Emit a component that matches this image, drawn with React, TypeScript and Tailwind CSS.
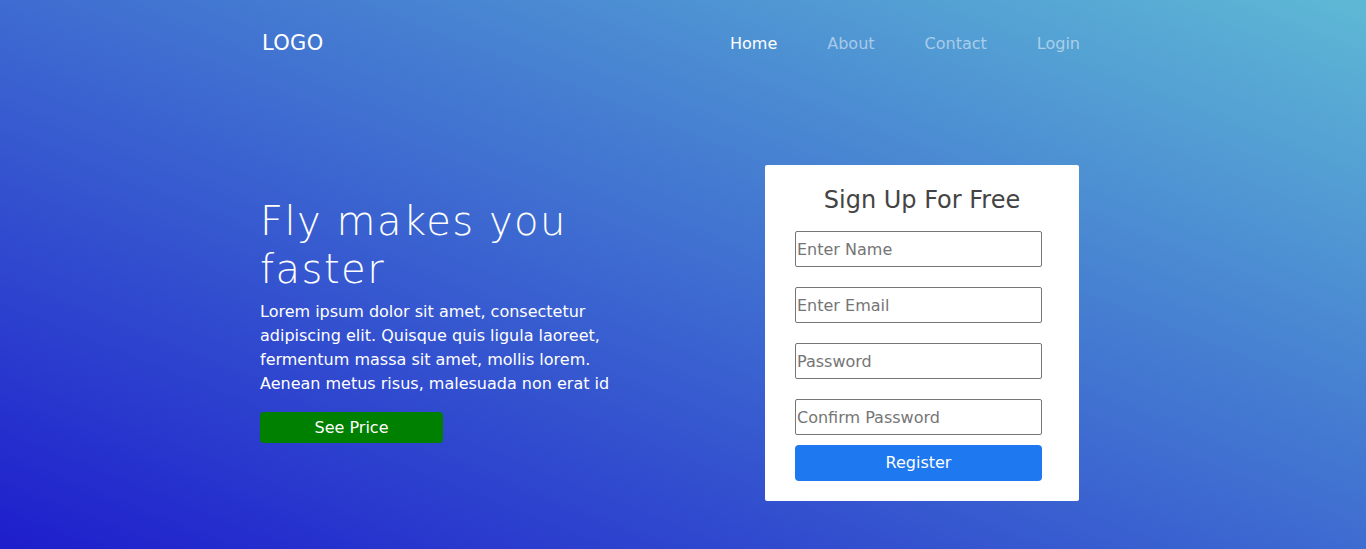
import { useState } from "react";

const navLinks = ["Home", "About", "Contact", "Login"];

const fields = [
  { name: "name", type: "text", placeholder: "Enter Name" },
  { name: "email", type: "email", placeholder: "Enter Email" },
  { name: "password", type: "password", placeholder: "Password" },
  { name: "confirm", type: "password", placeholder: "Confirm Password" },
];

const App = () => {
  const [values, setValues] = useState<Record<string, string>>({});

  return (
    <div className="min-h-[549px] w-full bg-[linear-gradient(to_top_right,#1e1ecc,#5eb9d5)] font-['DejaVu_Sans',sans-serif] text-white">
      <div className="ml-[260px] w-[820px]">
        <header className="flex h-[88px] items-center justify-between">
          <span className="pl-[2px] text-[21px] tracking-[0.3px]">LOGO</span>
          <nav className="flex gap-[50px] text-[16px]">
            {navLinks.map((link, i) => (
              <a
                key={link}
                href="#"
                className={i === 0 ? "text-white" : "text-white/50"}
              >
                {link}
              </a>
            ))}
          </nav>
        </header>

        <main className="mt-[77px] flex items-start justify-between">
          <section className="mt-[32px] w-[360px]">
            <h1 className="text-[40px] font-light leading-[48px] tracking-[1.5px]">
              Fly makes you faster
            </h1>
            <p className="mt-[7px] text-[16px] leading-[24px]">
              Lorem ipsum dolor sit amet, consectetur adipiscing elit. Quisque
              quis ligula laoreet, fermentum massa sit amet, mollis lorem.
              Aenean metus risus, malesuada non erat id
            </p>
            <button className="mt-[16px] h-[31px] w-[183px] rounded-[4px] bg-[#008000] text-[16px] text-white">
              See Price
            </button>
          </section>

          <form
            className="mr-[1px] flex w-[314px] flex-col items-center rounded-[2px] bg-white px-[30px] pb-[20px] pt-[19px]"
            onSubmit={(e) => e.preventDefault()}
          >
            <h2 className="text-[24px] leading-[32px] text-[#444]">
              Sign Up For Free
            </h2>
            <div className="mt-[15px] flex w-[247px] flex-col gap-[20px] self-start">
              {fields.map((f) => (
                <input
                  key={f.name}
                  name={f.name}
                  type={f.type}
                  placeholder={f.placeholder}
                  value={values[f.name] || ""}
                  onChange={(e) =>
                    setValues({ ...values, [f.name]: e.target.value })
                  }
                  className="h-[36px] w-[247px] rounded-[2px] border border-[#767676] px-[1px] text-[16px] text-[#333] placeholder:text-[#757575] outline-none"
                />
              ))}
            </div>
            <button
              type="submit"
              className="mt-[10px] h-[36px] w-[247px] self-start rounded-[4px] bg-[#1e78f0] text-[16px] text-white"
            >
              Register
            </button>
          </form>
        </main>
      </div>
    </div>
  );
};

export default App;
